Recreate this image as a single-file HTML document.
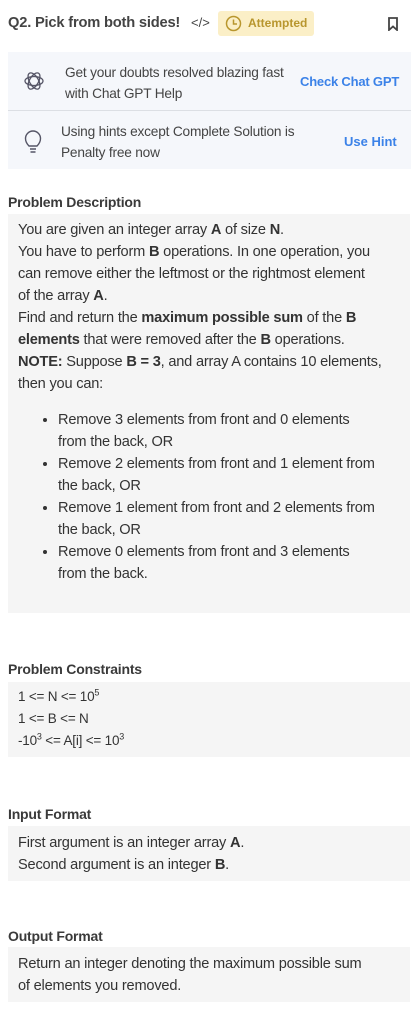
<!DOCTYPE html>
<html><head><meta charset="utf-8"><style>
body{margin:0;width:418px;height:1018px;background:#fff;font-family:"Liberation Sans",sans-serif;color:#333;overflow:hidden;position:relative}
.a{position:absolute}
.t{font-size:14.6px;line-height:22px;letter-spacing:-0.2px;white-space:nowrap}
b{font-weight:bold;color:#333}
.box{position:absolute;left:8px;width:402px;background:#f5f5f5}
h3{position:absolute;left:8px;margin:0;font-size:14px;font-weight:bold;color:#3a3a3a;letter-spacing:-0.2px}
sup{font-size:9px;line-height:0}
ul{margin:0;padding-left:40px}
</style></head><body>
<div class="a" style="left:8px;top:15px;font-size:14.7px;font-weight:bold;color:#444;letter-spacing:-0.2px">Q2. Pick from both sides!</div>
<div class="a" style="left:191px;top:15px;font-size:13px;color:#444">&lt;/&gt;</div>
<div class="a" style="left:218px;top:11px;width:96px;height:25px;background:#fbefc7;border-radius:3px"></div>
<svg class="a" style="left:225px;top:15px" width="17" height="17" viewBox="0 0 17 17"><circle cx="8.5" cy="8.5" r="7" fill="none" stroke="#b8962e" stroke-width="1.5"/><path d="M8.5 4.5V9H12" fill="none" stroke="#b8962e" stroke-width="1.5"/></svg>
<div class="a" style="left:248px;top:16px;font-size:12px;color:#b8962e;font-weight:bold">Attempted</div>
<svg class="a" style="left:387px;top:17px" width="12" height="14" viewBox="0 0 12 14"><path d="M2 1H10V13L6 9.5L2 13Z" fill="none" stroke="#444" stroke-width="1.8"/></svg>
<div class="a" style="left:8px;top:52px;width:403px;height:58px;background:#f5f7fb"></div>
<div class="a" style="left:8px;top:110px;width:403px;height:1px;background:#dcdfe4"></div>
<div class="a" style="left:8px;top:111px;width:403px;height:58px;background:#f5f7fb"></div>
<svg class="a" style="left:23px;top:70px" width="22" height="22" viewBox="0 0 22 22" fill="none" stroke="#556" stroke-width="1.3"><ellipse cx="11" cy="11" rx="9" ry="4.5"/><ellipse cx="11" cy="11" rx="9" ry="4.5" transform="rotate(60 11 11)"/><ellipse cx="11" cy="11" rx="9" ry="4.5" transform="rotate(120 11 11)"/></svg>
<div class="a t" style="left:65px;top:62px;font-size:13.7px;line-height:21px;color:#444">Get your doubts resolved blazing fast<br>with Chat GPT Help</div>
<div class="a" style="left:300px;top:74px;font-size:13px;font-weight:bold;color:#3b82e8;letter-spacing:-0.2px">Check Chat GPT</div>
<svg class="a" style="left:24px;top:130px" width="18" height="24" viewBox="0 0 18 24" fill="none" stroke="#556" stroke-width="1.4"><path d="M5 16C2 13 1.5 11 1.5 8.5A7.5 7.5 0 0 1 16.5 8.5C16.5 11 16 13 13 16Z"/><path d="M6 19H12M6.5 22H11.5"/></svg>
<div class="a t" style="left:61px;top:121px;font-size:13.7px;line-height:21px;color:#444">Using hints except Complete Solution is<br>Penalty free now</div>
<div class="a" style="left:344px;top:134px;font-size:13px;font-weight:bold;color:#3b82e8">Use Hint</div>

<h3 style="top:194px">Problem Description</h3>
<div class="box" style="top:214px;height:399px"></div>
<div class="a t" style="left:18px;top:219px">You are given an integer array <b>A</b> of size <b>N</b>.<br>You have to perform <b>B</b> operations. In one operation, you<br>can remove either the leftmost or the rightmost element<br>of the array <b>A</b>.<br>Find and return the <b>maximum possible sum</b> of the <b>B</b><br><b>elements</b> that were removed after the <b>B</b> operations.<br><b>NOTE:</b> Suppose <b>B = 3</b>, and array A contains 10 elements,<br>then you can:
<ul style="margin-top:14px;padding-left:40px;line-height:22px">
<li>Remove 3 elements from front and 0 elements<br>from the back, OR</li>
<li>Remove 2 elements from front and 1 element from<br>the back, OR</li>
<li>Remove 1 element from front and 2 elements from<br>the back, OR</li>
<li>Remove 0 elements from front and 3 elements<br>from the back.</li></ul></div>

<h3 style="top:661px">Problem Constraints</h3>
<div class="box" style="top:682px;height:75px"></div>
<div class="a t" style="left:18px;top:686px;line-height:22px;font-size:13.5px">1 &lt;= N &lt;= 10<sup>5</sup><br>1 &lt;= B &lt;= N<br>-10<sup>3</sup> &lt;= A[i] &lt;= 10<sup>3</sup></div>

<h3 style="top:806px">Input Format</h3>
<div class="box" style="top:826px;height:55px"></div>
<div class="a t" style="left:18px;top:832px">First argument is an integer array <b>A</b>.<br>Second argument is an integer <b>B</b>.</div>

<h3 style="top:928px">Output Format</h3>
<div class="box" style="top:947px;height:55px"></div>
<div class="a t" style="left:18px;top:953px">Return an integer denoting the maximum possible sum<br>of elements you removed.</div>
</body></html>
